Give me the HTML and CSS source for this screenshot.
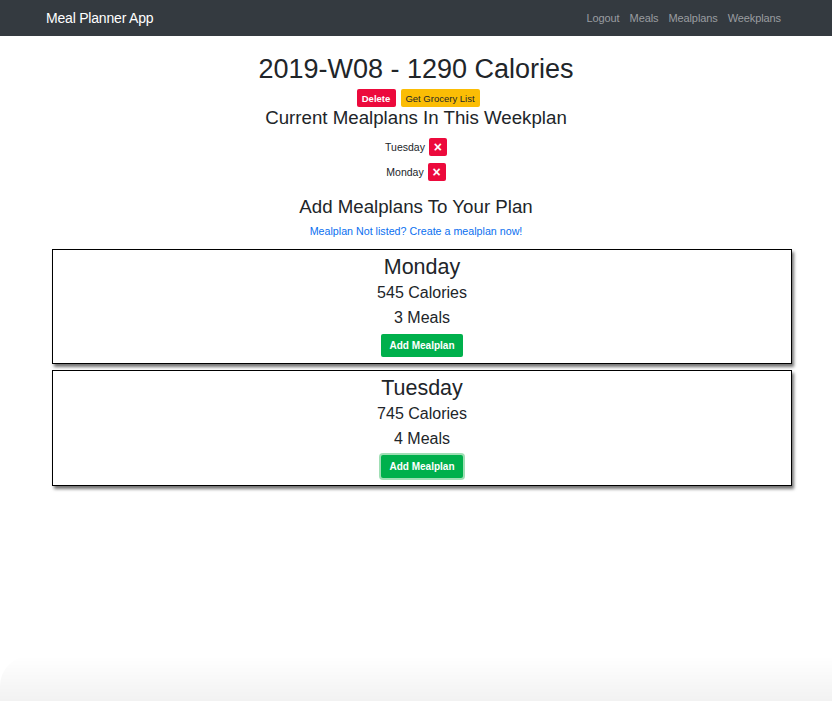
FILE: index.html
```html
<!DOCTYPE html>
<html lang="en">
<head>
<meta charset="utf-8">
<title>Meal Planner App</title>
<link rel="stylesheet" href="styles.css">
</head>
<body>
<nav class="navbar">
  <a class="brand" href="#">Meal Planner App</a>
  <div class="nav-links">
    <a href="#">Logout</a>
    <a href="#">Meals</a>
    <a href="#">Mealplans</a>
    <a href="#">Weekplans</a>
  </div>
</nav>
<main class="page">
  <h1 class="title">2019-W08 - 1290 Calories</h1>
  <div class="actions">
    <button class="btn btn-danger">Delete</button>
    <button class="btn btn-warning">Get Grocery List</button>
  </div>
  <h3 class="subtitle">Current Mealplans In This Weekplan</h3>
  <ul class="current">
    <li><span>Tuesday</span><button class="btn-x">&times;</button></li>
    <li><span>Monday</span><button class="btn-x">&times;</button></li>
  </ul>
  <h3 class="subtitle add-title">Add Mealplans To Your Plan</h3>
  <a class="create-link" href="#">Mealplan Not listed? Create a mealplan now!</a>
  <section class="card">
    <h2 class="card-title">Monday</h2>
    <p class="card-line">545 Calories</p>
    <p class="card-line">3 Meals</p>
    <button class="btn btn-success">Add Mealplan</button>
  </section>
  <section class="card card-last">
    <h2 class="card-title">Tuesday</h2>
    <p class="card-line">745 Calories</p>
    <p class="card-line">4 Meals</p>
    <button class="btn btn-success focused">Add Mealplan</button>
  </section>
</main>
<div class="bottom-shade"></div>
</body>
</html>
```
FILE: styles.css
```css
* { box-sizing: border-box; }
html, body { margin: 0; padding: 0; }
body {
  font-family: "Liberation Sans", Arial, sans-serif;
  color: #212529;
  background: #fff;
  min-height: 701px;
}
.navbar {
  height: 36px;
  background: #343a40;
  display: flex;
  align-items: center;
  justify-content: space-between;
  padding: 0 51px 0 46px;
}
.brand {
  color: #fff;
  text-decoration: none;
  font-size: 14px;
  letter-spacing: -0.2px;
}
.nav-links {
  display: flex;
  gap: 10px;
}
.nav-links a {
  color: #9a9da1;
  text-decoration: none;
  font-size: 11px;
  letter-spacing: -0.1px;
}
.page {
  display: flex;
  flex-direction: column;
  align-items: center;
}
.title {
  margin: 17px 0 0;
  font-size: 27px;
  font-weight: 400;
  line-height: 32px;
}
.actions {
  display: flex;
  gap: 5px;
  margin: 4px 0 0 4px;
}
.btn {
  border: none;
  border-radius: 2px;
  font-family: "Liberation Sans", Arial, sans-serif;
  font-size: 9px;
  height: 18px;
  padding: 0 6px;
  cursor: pointer;
}
.btn-danger { background: #ec0a3c; color: #fff; width: 39px; font-weight: 700; padding: 0; font-size: 9.5px; }
.btn-warning { background: #fbbd05; color: #212529; width: 79px; padding: 0; font-size: 9.5px; }
.subtitle {
  margin: 0;
  font-size: 18.7px;
  font-weight: 400;
  line-height: 22px;
}
.current {
  list-style: none;
  margin: 9px 0 0;
  padding: 0;
  display: flex;
  flex-direction: column;
  align-items: center;
  gap: 7px;
}
.current li {
  display: flex;
  align-items: center;
  gap: 4px;
  font-size: 10.5px;
}
.btn-x {
  width: 18px;
  height: 18px;
  border: none;
  border-radius: 2px;
  background: #ec0a3c;
  color: #fff;
  font-size: 14px;
  font-weight: 700;
  line-height: 18px;
  padding: 0 0 1px;
  display: flex;
  align-items: center;
  justify-content: center;
  font-family: "Liberation Sans", Arial, sans-serif;
}
.add-title { margin-top: 15px; }
.create-link {
  margin-top: 7px;
  font-size: 10.7px;
  color: #0a6ff0;
  text-decoration: none;
  line-height: 12px;
}
.card {
  width: 740px;
  margin: 12px 0 0 12px;
  border: 1px solid #000;
  box-shadow: 2px 3px 3px rgba(0,0,0,0.55);
  display: flex;
  flex-direction: column;
  align-items: center;
  padding: 5px 0 6px;
}
.card + .card { margin-top: 6px; }
.card-last { padding-bottom: 7px; }
.card-title {
  margin: 0;
  font-size: 21.5px;
  font-weight: 400;
  line-height: 25px;
}
.card-line {
  margin: 1px 0 0;
  font-size: 16px;
  line-height: 24px;
}
.btn-success {
  margin-top: 4px;
  background: #00b04c;
  color: #fff;
  font-weight: 700;
  font-size: 10px;
  width: 82px;
  height: 23px;
  border-radius: 2px;
  padding: 0;
}
.btn-success.focused {
  box-shadow: 0 0 0 2px rgba(120, 210, 150, 0.7);
}
.bottom-shade {
  position: fixed;
  left: 0;
  right: 0;
  bottom: 0;
  height: 45px;
  border-top-left-radius: 30px;
  background: linear-gradient(to bottom, rgba(0,0,0,0), rgba(0,0,0,0.05));
  pointer-events: none;
}
```
